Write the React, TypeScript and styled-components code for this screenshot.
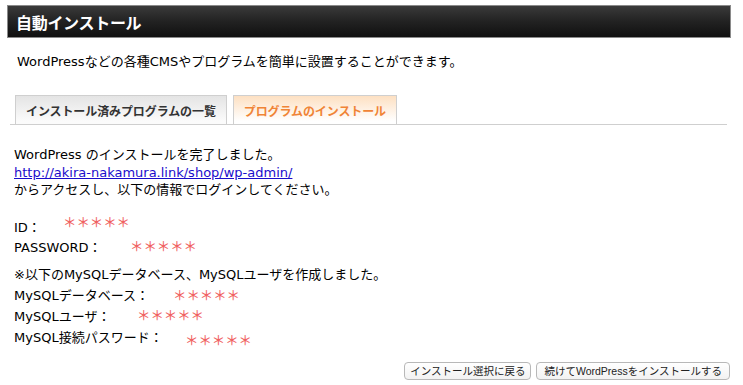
import styled, { createGlobalStyle } from "styled-components";

const GlobalStyle = createGlobalStyle`
  body {
    margin: 0;
    background: #fff;
    color: #000;
    font-family: "DejaVu Sans", "Noto Sans CJK JP", sans-serif;
    font-size: 13px;
  }
`;

export default function App() {
  return (
    <>
      <GlobalStyle />
      <Page>
        <Header>自動インストール</Header>
        <Lead>WordPressなどの各種CMSやプログラムを簡単に設置することができます。</Lead>

        <Tabs>
          <Tab>インストール済みプログラムの一覧</Tab>
          <Tab $active>プログラムのインストール</Tab>
        </Tabs>

        <Content>
          <Block>
            <div>WordPress のインストールを完了しました。</div>
            <div>
              <UrlLink href="#">http://akira-nakamura.link/shop/wp-admin/</UrlLink>
            </div>
            <div>からアクセスし、以下の情報でログインしてください。</div>
          </Block>

          <InfoBlock>
            <Row>
              ID：
              <Mask $left={49} $shift={-6}>＊＊＊＊＊</Mask>
            </Row>
            <Row>
              PASSWORD：
              <Mask $left={116} $shift={-2}>＊＊＊＊＊</Mask>
            </Row>
          </InfoBlock>

          <DbBlock>
            <Row>※以下のMySQLデータベース、MySQLユーザを作成しました。</Row>
            <Row>
              MySQLデータベース：
              <Mask $left={159} $shift={0}>＊＊＊＊＊</Mask>
            </Row>
            <Row>
              MySQLユーザ：
              <Mask $left={123} $shift={-1}>＊＊＊＊＊</Mask>
            </Row>
            <Row>
              MySQL接続パスワード：
              <Mask $left={171} $shift={3}>＊＊＊＊＊</Mask>
            </Row>
          </DbBlock>
        </Content>

        <Actions>
          <Button $pad={5}>インストール選択に戻る</Button>
          <Button $pad={7}>続けてWordPressをインストールする</Button>
        </Actions>
      </Page>
    </>
  );
}

const Page = styled.div`
  padding: 5px 12px 0 7px;
`;

const Header = styled.h1`
  margin: 0;
  height: 31px;
  display: flex;
  align-items: center;
  padding-left: 8px;
  border: 1px solid #8a8a8a;
  background: linear-gradient(#3a3a3a, #222 50%, #101010);
  color: #fff;
  font-size: 16px;
  font-weight: bold;
  font-family: "Noto Sans CJK JP", sans-serif;
  letter-spacing: -0.3px;
`;

const Lead = styled.p`
  margin: 15px 0 0;
  padding-left: 10px;
  line-height: 18px;
`;

const Tabs = styled.div`
  display: flex;
  gap: 6px;
  margin: 24px 4px 0 3px;
  padding-left: 5px;
  border-bottom: 1px solid #cfcfcf;
`;

const Tab = styled.div<{ $active?: boolean }>`
  height: 28px;
  display: flex;
  align-items: center;
  padding: 0 10px;
  border: 1px solid #cfcfcf;
  border-bottom: none;
  font-family: "Noto Sans CJK JP", sans-serif;
  font-size: 12px;
  font-weight: bold;
  letter-spacing: -0.1px;
  color: ${(p) => (p.$active ? "#f08436" : "#333")};
  background: ${(p) =>
    p.$active
      ? "linear-gradient(#fde0c2, #fff 90%)"
      : "linear-gradient(#e4e4e4, #fbfbfb 90%)"};
`;

const Content = styled.div`
  padding-left: 7px;
`;

const Block = styled.div`
  margin-top: 21px;
  line-height: 17.5px;
`;

const UrlLink = styled.a`
  color: #1a0dcc;
  text-decoration: underline;
`;

const InfoBlock = styled.div`
  margin-top: 19px;
  line-height: 20px;
`;

const DbBlock = styled.div`
  margin-top: 6px;
  line-height: 21px;
`;

const Row = styled.div`
  position: relative;
`;

const Mask = styled.span<{ $left: number; $shift: number }>`
  position: absolute;
  left: ${(p) => p.$left}px;
  top: calc(50% + ${(p) => p.$shift}px);
  transform: translateY(-50%);
  font-family: "Noto Sans CJK JP", sans-serif;
  font-size: 13.4px;
  font-weight: 500;
  line-height: 1;
  color: #f06262;
`;

const Actions = styled.div`
  display: flex;
  justify-content: flex-end;
  gap: 5px;
  margin: 14px 1px 0 0;
`;

const Button = styled.button<{ $pad: number }>`
  height: 18px;
  padding: 0 ${(p) => p.$pad}px;
  border: 1px solid #b8b8b8;
  border-radius: 4px;
  background: linear-gradient(#fff, #f2f2f2);
  color: #222;
  font-family: "Liberation Sans", "Noto Sans CJK JP", sans-serif;
  font-size: 10.5px;
  line-height: 16px;
`;
